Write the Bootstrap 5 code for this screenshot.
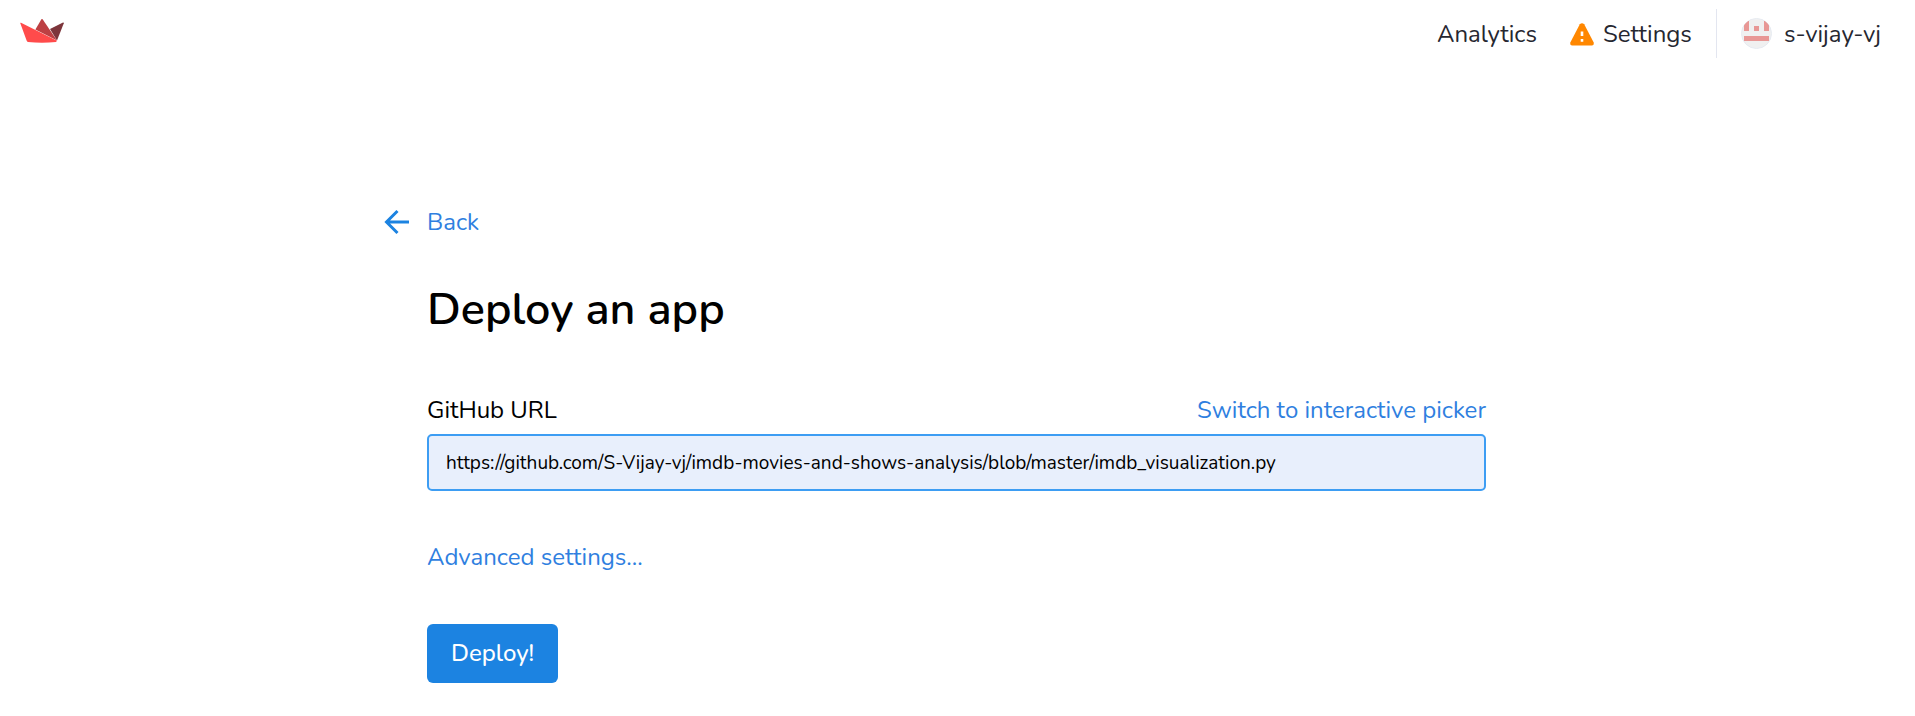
<!DOCTYPE html>
<html lang="en">
<head>
<meta charset="utf-8">
<meta name="viewport" content="width=device-width, initial-scale=1">
<title>Deploy an app</title>
<link href="https://cdn.jsdelivr.net/npm/bootstrap@5.3.0/dist/css/bootstrap.min.css" rel="stylesheet">
<style>
  body { font-family: Nunito, Lato, sans-serif; font-size: 24px; line-height: 36px; color: #000; background: #fff; }
  a { color: #2f7fe0; text-decoration: none; }
  .topbar { padding: 9px 34px 9px 20px; }
  .topbar a { color: #262730; }
  .brand { padding-top: 9px; }
  .topbar-links { gap: 32px; }
  .account { height: 49px; margin-left: -8px; padding-left: 24px; border-left: 1px solid #e3e6f0; gap: 12px; }
  .deploy-form { max-width: 1061px; padding: 137px 2px 0 0; }
  .back-link { margin-left: -44px; gap: 16px; }
  h1 { font-size: 45px; line-height: 60px; font-weight: 600; margin: 34px 0 52px; }
  .field-head { margin-bottom: 6px; }
  .url-box { height: 57px; padding: 0 17px; font-size: 19px; color: #000; border: 2px solid #3d9df3; border-radius: 5px; background: #e8effc; }
  .url-box:focus { background: #e8effc; color: #000; }
  .advanced { margin: 48px 0 49px; }
  .btn-deploy { padding: 11px 24px 12px; font-size: 24px; line-height: 36px; font-weight: 500; border: 0; border-radius: 6px; color: #fff; background: #1c83e1; }
</style>
</head>
<body>
<header class="topbar d-flex align-items-start justify-content-between">
  <a href="#" aria-label="Home" class="brand d-flex">
    <svg width="44" height="26" viewBox="0 0 44 26" aria-hidden="true">
      <path d="M15.4 11.6 21.4 1.3Q22 .8 22.6 1.3L37 22.4Z" fill="#bd4043"/>
      <path d="M30 11 43 4.6Q44 4.4 43.8 5.3L37 22.6Z" fill="#7d353b"/>
      <path d="M.3 5.2Q0 4.4 1 4.8L37 22.8 36 24Q22 25.6 8 24 7 23.8 6.6 22.6Z" fill="#ff4b4b"/>
    </svg>
  </a>
  <nav class="topbar-links d-flex align-items-center">
    <a href="#">Analytics</a>
    <a href="#" class="d-flex align-items-center gap-2">
      <svg width="26" height="24" viewBox="0 0 26 24" aria-hidden="true">
        <path d="M10.8 2.2Q13 .2 15.2 2.2L24.7 20.5Q25.2 23.3 22.8 23.5H3.2Q.8 23.3 1.3 20.5Z" fill="#ff8700"/>
        <path d="M13 9.5V14M13 17V19.7" stroke="#fff" stroke-width="2.6"/>
      </svg>
      Settings
    </a>
    <a href="#" class="account d-flex align-items-center">
      <svg width="31" height="31" viewBox="0 0 31 31" aria-hidden="true">
        <defs><clipPath id="face"><circle cx="15.5" cy="15.5" r="15"/></clipPath></defs>
        <circle cx="15.5" cy="15.5" r="15" fill="#f0f0f0" stroke="#e6eaf1"/>
        <path clip-path="url(#face)" d="M3 3H8V13H3ZM23 3H28V13H23ZM13 8H18V13H13ZM3 18H28V23H3Z" fill="#e89795"/>
      </svg>
      s-vijay-vj
    </a>
  </nav>
</header>
<main class="deploy-form mx-auto">
  <a href="#" class="back-link d-inline-flex align-items-center">
    <svg width="28" height="28" viewBox="0 0 28 28" fill="none" stroke="#1c83e1" stroke-width="3" aria-hidden="true">
      <path d="M26 14H4M14.5 3 3.5 14 14.5 25"/>
    </svg>
    Back
  </a>
  <h1>Deploy an app</h1>
  <form>
    <div class="field-head d-flex justify-content-between">
      <label for="url">GitHub URL</label>
      <a href="#">Switch to interactive picker</a>
    </div>
    <input id="url" type="text" class="form-control url-box shadow-none" value="https://github.com/S-Vijay-vj/imdb-movies-and-shows-analysis/blob/master/imdb_visualization.py">
    <div class="advanced"><a href="#">Advanced settings...</a></div>
    <button type="button" class="btn btn-deploy">Deploy!</button>
  </form>
</main>
<script src="https://cdn.jsdelivr.net/npm/bootstrap@5.3.0/dist/js/bootstrap.bundle.min.js"></script>
</body>
</html>
